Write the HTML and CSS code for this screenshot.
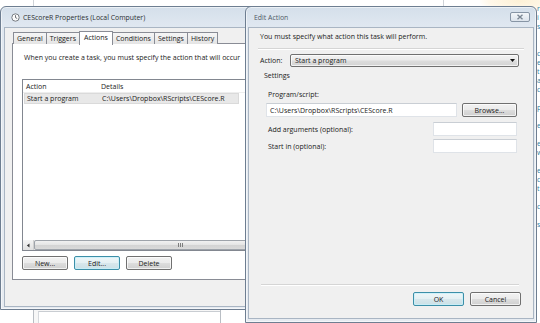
FILE: index.html
```html
<!DOCTYPE html>
<html>
<head>
<meta charset="utf-8">
<link rel="stylesheet" href="styles.css">
</head>
<body>
<div class="desk">
  <div class="bgline bl1"></div>
  <div class="bgline bl2"></div>
  <div class="glow"></div>
  <div class="under"><div class="under-inner"></div></div>

  <section class="win win-props">
    <header class="titlebar">
      <svg class="clock" width="9" height="9" viewBox="0 0 9 9"><circle cx="4.5" cy="4.5" r="3.7" fill="#fbfbfb" stroke="#6a6f76" stroke-width="0.9"/><path d="M4.5 2.2V4.6L6.2 5.5" fill="none" stroke="#4a4f56" stroke-width="0.8"/></svg>
      <span class="title-text">CEScoreR Properties (Local Computer)</span>
    </header>
    <div class="client props-client">
      <div class="tabs">
        <span class="tab">General</span>
        <span class="tab">Triggers</span>
        <span class="tab tab-sel">Actions</span>
        <span class="tab">Conditions</span>
        <span class="tab">Settings</span>
        <span class="tab">History</span>
      </div>
      <div class="panel">
        <p class="intro">When you create a task, you must specify the action that will occur</p>
        <div class="listbox">
          <div class="lv-head"><span class="c1">Action</span><span class="c2">Details</span></div>
          <div class="lv-row"><span class="c1">Start a program</span><span class="c2">C:\Users\Dropbox\RScripts\CEScore.R</span></div>
          <div class="lv-space"></div>
          <div class="hscroll">
            <span class="sarrow"><svg width="4" height="5" viewBox="0 0 4 5"><path d="M3.5 0.5L0.8 2.5L3.5 4.5Z" fill="#333"/></svg></span>
            <span class="thumb"><span class="grip"></span></span>
          </div>
        </div>
        <div class="btnrow">
          <span class="btn btn-s">New...</span>
          <span class="btn btn-s btn-focus">Edit...</span>
          <span class="btn btn-s">Delete</span>
        </div>
      </div>
    </div>
  </section>

  <section class="win win-edit">
    <header class="titlebar">
      <span class="title-text title-edit">Edit Action</span>
      <span class="closebtn"><svg width="8" height="6" viewBox="0 0 8 6"><path d="M1.5 0.8L6.5 5.2M6.5 0.8L1.5 5.2" stroke="#7b8794" stroke-width="1.4"/></svg></span>
    </header>
    <div class="client edit-client">
      <p class="must">You must specify what action this task will perform.</p>
      <div class="sep"></div>
      <div class="action-row">
        <span class="action-label">Action:</span>
        <span class="combo"><span class="combo-text">Start a program</span><svg width="5" height="3" viewBox="0 0 5 3"><path d="M0 0H5L2.5 3Z" fill="#111"/></svg></span>
      </div>
      <div class="settings-label">Settings</div>
      <div class="group">
        <div class="lbl prog-lbl">Program/script:</div>
        <div class="prog-row">
          <span class="tbox tbox-wide">C:\Users\Dropbox\RScripts\CEScore.R</span>
          <span class="btn btn-browse">Browse...</span>
        </div>
        <div class="opt-row opt-args">
          <span class="lbl">Add arguments (optional):</span>
          <span class="tbox tbox-small"></span>
        </div>
        <div class="opt-row opt-start">
          <span class="lbl">Start in (optional):</span>
          <span class="tbox tbox-small"></span>
        </div>
      </div>
      <div class="footer">
        <div class="sep sep-foot"></div>
        <div class="foot-btns">
          <span class="btn btn-ok btn-focus">OK</span>
          <span class="btn btn-ok">Cancel</span>
        </div>
      </div>
    </div>
  </section>

  <div class="edge-text">
    <span>r</span><span>i</span><span>s</span><span></span><span></span><span>c</span><span>e</span><span>t</span><span>a</span><span>c</span><span></span><span>p</span><span></span><span>e</span><span></span><span>e</span><span>w</span><span></span><span>e</span><span>c</span><span>t</span><span></span><span>c</span><span></span><span>s</span>
  </div>
</div>
</body>
</html>
```
FILE: styles.css
```css
* { box-sizing: border-box; }
html, body { margin: 0; padding: 0; }
body {
  width: 540px;
  height: 323px;
  overflow: hidden;
  background: #ffffff;
  font-family: "Open Sans", "Noto Sans", sans-serif;
  font-size: 7px;
  color: #1a1a1a;
}
.desk { position: relative; width: 540px; height: 323px; overflow: hidden; }
p { margin: 0; }

.bgline { position: absolute; top: 0; width: 1px; height: 7px; background: #cfd3d8; }
.bl1 { left: 33px; }
.bl2 { left: 443px; }
.glow {
  position: absolute; left: 480px; top: -10px; width: 80px; height: 22px;
  background: radial-gradient(ellipse at center, #fdf1d6 0%, #fff8ea 55%, rgba(255,255,255,0) 75%);
}
.under {
  position: absolute; left: 33px; top: 306px; width: 188px; height: 30px;
  border-left: 1px solid #b9bec4; border-right: 1px solid #b9bec4;
  background: #f7f7f7;
}
.under-inner {
  margin: 5px 0 0 4px; height: 30px; background: #fff;
  border-top: 1px solid #c9cdd2; border-left: 1px solid #d6d9dd;
}

/* windows */
.win {
  position: absolute;
  display: flex;
  flex-direction: column;
  border: 1px solid #6e7e91;
  border-radius: 6px 6px 0 0;
  background: linear-gradient(180deg, #d4dfea 0px, #dfe7f0 18px, #e3e9f0 60px, #e6ebf1 100%);
  box-shadow: inset 0 0 0 1px rgba(255,255,255,0.55);
}
.win-props { left: 0; top: 6px; width: 262px; height: 304px; padding: 0 3px 2px 3px; }
.win-edit { left: 245px; top: 6px; width: 292px; height: 317px; padding: 0 2px 3px 2px; }

.titlebar {
  height: 20px;
  display: flex;
  align-items: center;
  flex: none;
}
.clock { margin: 1px 3px 0 7px; flex: none; }
.title-text { font-size: 6.9px; color: #2c2f33; padding-top: 1px; white-space: nowrap; }
.title-edit { margin-left: 6px; color: #4f5a66; }
.closebtn {
  margin-left: auto;
  margin-right: 4px;
  width: 20px; height: 10px;
  border: 1px solid #8795a5;
  border-radius: 2px;
  background: linear-gradient(180deg, #f3f6f9, #dde4ec);
  display: flex; align-items: center; justify-content: center;
}

.client {
  flex: 1;
  background: #f0f0f0;
  border: 1px solid #a9b5c3;
  display: flex;
  flex-direction: column;
}

/* properties window */
.props-client { padding: 3px 0 0 7px; overflow: hidden; }
.tabs { display: flex; align-items: flex-end; height: 13px; margin-left: 1px; position: relative; z-index: 2; }
.tab {
  height: 12px;
  padding: 0 3px;
  border: 1px solid #898c95;
  border-bottom: none;
  margin-right: -1px;
  background: linear-gradient(180deg, #f6f6f6, #e4e4e4);
  display: flex; align-items: center;
  white-space: nowrap;
}
.tab-sel { height: 14px; background: #ffffff; margin-bottom: -1px; padding: 0 4px 2px; }

.panel {
  height: 237px;
  width: 250px;
  margin-top: -1px;
  border: 1px solid #898c95;
  background: #ffffff;
  padding: 9px 0 0 9px;
  display: flex;
  flex-direction: column;
}
.intro { white-space: nowrap; line-height: 10px; margin-left: 2px; }
.listbox {
  margin-top: 16px;
  height: 172px;
  width: 240px;
  border: 1px solid #828790;
  display: flex;
  flex-direction: column;
}
.lv-head { height: 13px; display: flex; align-items: center; border-bottom: 1px solid #eeeeee; padding-left: 3px; }
.lv-row {
  height: 11px; width: 215px; display: flex; align-items: center; padding-left: 2px; margin-left: 1px;
  background: #e8e8e8; border: 1px solid #dadada;
}
.c1 { width: 75px; flex: none; white-space: nowrap; }
.c2 { white-space: nowrap; }
.lv-space { flex: 1; }
.hscroll {
  height: 10px; display: flex;
  background: #eaeaea;
}
.sarrow {
  width: 11px; display: flex; align-items: center; justify-content: center;
  background: linear-gradient(180deg, #f4f4f4, #e0e0e0);
  border-right: 1px solid #d0d0d0;
}
.thumb {
  flex: 1;
  border: 1px solid #9ea3aa;
  border-radius: 2px;
  background: linear-gradient(180deg, #f1f1f1 0%, #e4e4e4 50%, #d3d3d3 51%, #dadada 100%);
  position: relative;
}
.grip {
  position: absolute; left: 143px; top: 2px; width: 5px; height: 4px;
  background: repeating-linear-gradient(90deg, #7d7d7d 0 1px, transparent 1px 2px);
}
.btnrow { display: flex; gap: 6px; margin-top: 5px; }

.btn {
  height: 14px;
  border: 1px solid #707070;
  border-radius: 2px;
  background: linear-gradient(180deg, #f2f2f2 0%, #ebebeb 48%, #dddddd 52%, #cfcfcf 100%);
  display: flex; align-items: center; justify-content: center;
  white-space: nowrap;
  box-shadow: inset 0 0 0 1px rgba(255,255,255,0.7);
}
.btn-s { width: 46px; }
.btn-focus {
  border-color: #3c8fa8;
  background: linear-gradient(180deg, #eef6f8 0%, #e4f0f3 48%, #d7e7ec 52%, #cbe0e6 100%);
  box-shadow: inset 0 0 0 1px rgba(200,240,250,0.8);
}

/* edit action */
.edit-client { padding: 4px 9px 0 11px; }
.must { line-height: 10px; white-space: nowrap; }
.sep { height: 2px; border-top: 1px solid #d5d5d5; border-bottom: 1px solid #ffffff; margin: 6px 0 0 -2px; }
.action-row { display: flex; align-items: center; margin-top: 4px; height: 13px; }
.action-label { width: 30px; flex: none; white-space: nowrap; }
.combo {
  width: 229px; height: 13px;
  flex: none;
  border: 1px solid #707070;
  border-radius: 2px;
  background: linear-gradient(180deg, #f2f2f2 0%, #ebebeb 48%, #dddddd 52%, #d3d3d3 100%);
  display: flex; align-items: center; justify-content: space-between;
  padding: 0 3px 0 4px;
  box-shadow: inset 0 0 0 1px rgba(255,255,255,0.7);
}
.combo-text { white-space: nowrap; }
.settings-label { margin: 4px 0 0 4px; line-height: 10px; }
.group { padding-left: 6px; }
.lbl { white-space: nowrap; }
.prog-lbl { margin-top: 9px; line-height: 10px; margin-left: 2px; }
.prog-row { display: flex; align-items: flex-start; margin-top: 3px; }
.tbox {
  height: 14px;
  background: #ffffff;
  border: 1px solid #dfe3e8;
  border-top-color: #c9ced4;
  display: flex; align-items: center;
  padding-left: 3px;
  white-space: nowrap;
}
.tbox-wide { width: 191px; }
.btn-browse { width: 55px; margin-left: 5px; height: 14px; }
.opt-row { display: flex; align-items: center; justify-content: space-between; width: 251px; padding-left: 2px; }
.opt-args { margin-top: 5px; }
.opt-start { margin-top: 3px; }
.tbox-small { width: 84px; }

.footer { margin-top: auto; padding-bottom: 12px; }
.sep-foot { margin: 0 5px 0 1px; }
.foot-btns { display: flex; justify-content: flex-end; gap: 6px; margin-top: 6px; padding-right: 3px; }
.btn-ok { width: 51px; }

.edge-text {
  position: absolute; left: 537px; top: 4px;
  display: flex; flex-direction: column;
  color: #2e7fa6;
  font-size: 7px;
  line-height: 9px;
}
.edge-text span { height: 9px; }
```
